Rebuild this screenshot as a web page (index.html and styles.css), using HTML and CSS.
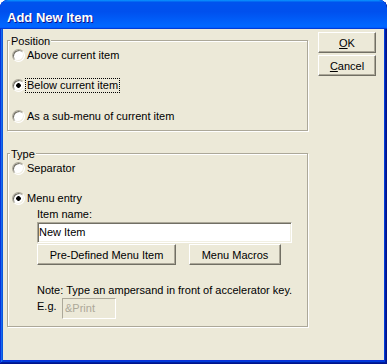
FILE: index.html
```html
<!DOCTYPE html>
<html lang="en">
<head>
  <meta charset="UTF-8" />
  <title>Add New Item</title>
  <link rel="stylesheet" href="styles.css">
</head>
<body>
  <div class="window">
    <div class="titlebar"><span class="title">Add New Item</span></div>
    <div class="client">
      <div class="main">
        <div class="group position">
          <div class="legend">Position</div>
          <div class="option"><span class="radio"></span><span class="label">Above current item</span></div>
          <div class="option gap14"><span class="radio checked"></span><span class="label focus">Below current item</span></div>
          <div class="option gap15"><span class="radio"></span><span class="label">As a sub-menu of current item</span></div>
        </div>

        <div class="group type">
          <div class="legend">Type</div>
          <div class="option"><span class="radio"></span><span class="label">Separator</span></div>
          <div class="option gap14"><span class="radio checked"></span><span class="label">Menu entry</span></div>
          <div class="entry">
            <div class="field-label">Item name:</div>
            <div class="textbox name-box">New Item</div>
            <div class="button-row">
              <button class="btn btn-predef">Pre-Defined Menu Item</button>
              <button class="btn btn-macros">Menu Macros</button>
            </div>
            <div class="note">Note: Type an ampersand in front of accelerator key.</div>
            <div class="example">
              <span class="example-label">E.g.</span>
              <div class="textbox disabled">&amp;Print</div>
            </div>
          </div>
        </div>
      </div>

      <div class="side">
        <button class="btn btn-side"><u>O</u>K</button>
        <button class="btn btn-side"><u>C</u>ancel</button>
      </div>
    </div>
  </div>
</body>
</html>
```

FILE: styles.css
```css
body { margin: 0; background: #fff; font: 11px "Liberation Sans", Arial, sans-serif; color: #000; }

.window {
  width: 387px; height: 364px; box-sizing: border-box;
  display: flex; flex-direction: column;
  background: #0831d9; border-radius: 8px 8px 0 0; overflow: hidden;
  box-shadow: inset -1px -1px #00138c, inset 1px 1px #0831d9, inset -2px -2px #001ea0,
              inset 2px 2px #166aee, inset -3px -3px #003bda, inset 3px 3px #0855dd;
}

.titlebar {
  height: 29px; box-sizing: border-box; flex: none;
  padding: 5px 0 0 7px; display: flex; align-items: center;
  border-radius: 8px 8px 0 0;
  background: linear-gradient(180deg, #0997ff, #0053ee 8%, #0050ee 40%, #06f 88%, #06f 93%, #005bff 95%, #003dd7 96%, #003dd7);
}
.title { color: #fff; font-weight: bold; font-size: 13px; text-shadow: 1px 1px #0f1089; }

.client {
  flex: 1; display: flex; box-sizing: border-box;
  margin: 0 3px 4px; padding: 3px 0 0 4px; background: #ece9d8;
}

.main { width: 301px; flex: none; }
.side { margin-left: 10px; display: flex; flex-direction: column; gap: 2px; }

.group {
  border: 1px solid #aca899;
  box-shadow: inset 1px 1px #fff, 1px 1px #fff;
  padding: 0 4px 6px;
}
.position { margin-top: 8px; }
.type { margin-top: 22px; padding-bottom: 7px; }

.legend {
  width: fit-content; margin: -6px 0 -1px -2px; padding: 0 1px;
  line-height: 13px; background: #ece9d8;
}

.option { display: flex; align-items: center; height: 16px; }
.gap14 { margin-top: 14px; }
.gap15 { margin-top: 15px; }

.radio {
  width: 13px; height: 13px; box-sizing: border-box; flex: none;
  border-radius: 50%; border: 1px solid; border-color: #aca899 #fff #fff #aca899;
  box-shadow: inset 1px 1px #716f64, inset -1px -1px #f1efe2;
  background: #fff;
}
.radio.checked { background: radial-gradient(circle, #000 0 2px, #fff 2.6px); }

.label { padding: 0 1px; border: 1px solid transparent; line-height: 13px; white-space: nowrap; }
.label.focus { border: 1px dotted #000; }

.entry { padding-left: 25px; }
.field-label { margin-top: 2px; line-height: 13px; }

.textbox {
  height: 21px; box-sizing: border-box;
  border: 1px solid; border-color: #aca899 #fff #fff #aca899;
  box-shadow: inset 1px 1px #716f64, inset -1px -1px #f1efe2;
  background: #fff; padding: 0 0 0 1px; line-height: 19px; white-space: nowrap;
}
.name-box { width: 255px; margin-top: 1px; }
.textbox.disabled { width: 54px; background: #ece9d8; color: #aca899; padding-left: 2px; box-shadow: none; }

.button-row { display: flex; gap: 13px; margin-top: 1px; }
.btn {
  height: 21px; padding: 0; font: inherit; color: #000;
  background: #ece9d8; border: 1px solid; border-color: #fff #716f64 #716f64 #fff;
  box-shadow: inset -1px -1px #aca899;
}
.btn-predef { width: 139px; }
.btn-macros { width: 92px; }
.btn-side { width: 58px; }

.note { margin-top: 19px; line-height: 13px; white-space: nowrap; }
.example { display: flex; margin-top: 1px; }
.example-label { width: 25px; margin-top: 2px; line-height: 13px; }
```
